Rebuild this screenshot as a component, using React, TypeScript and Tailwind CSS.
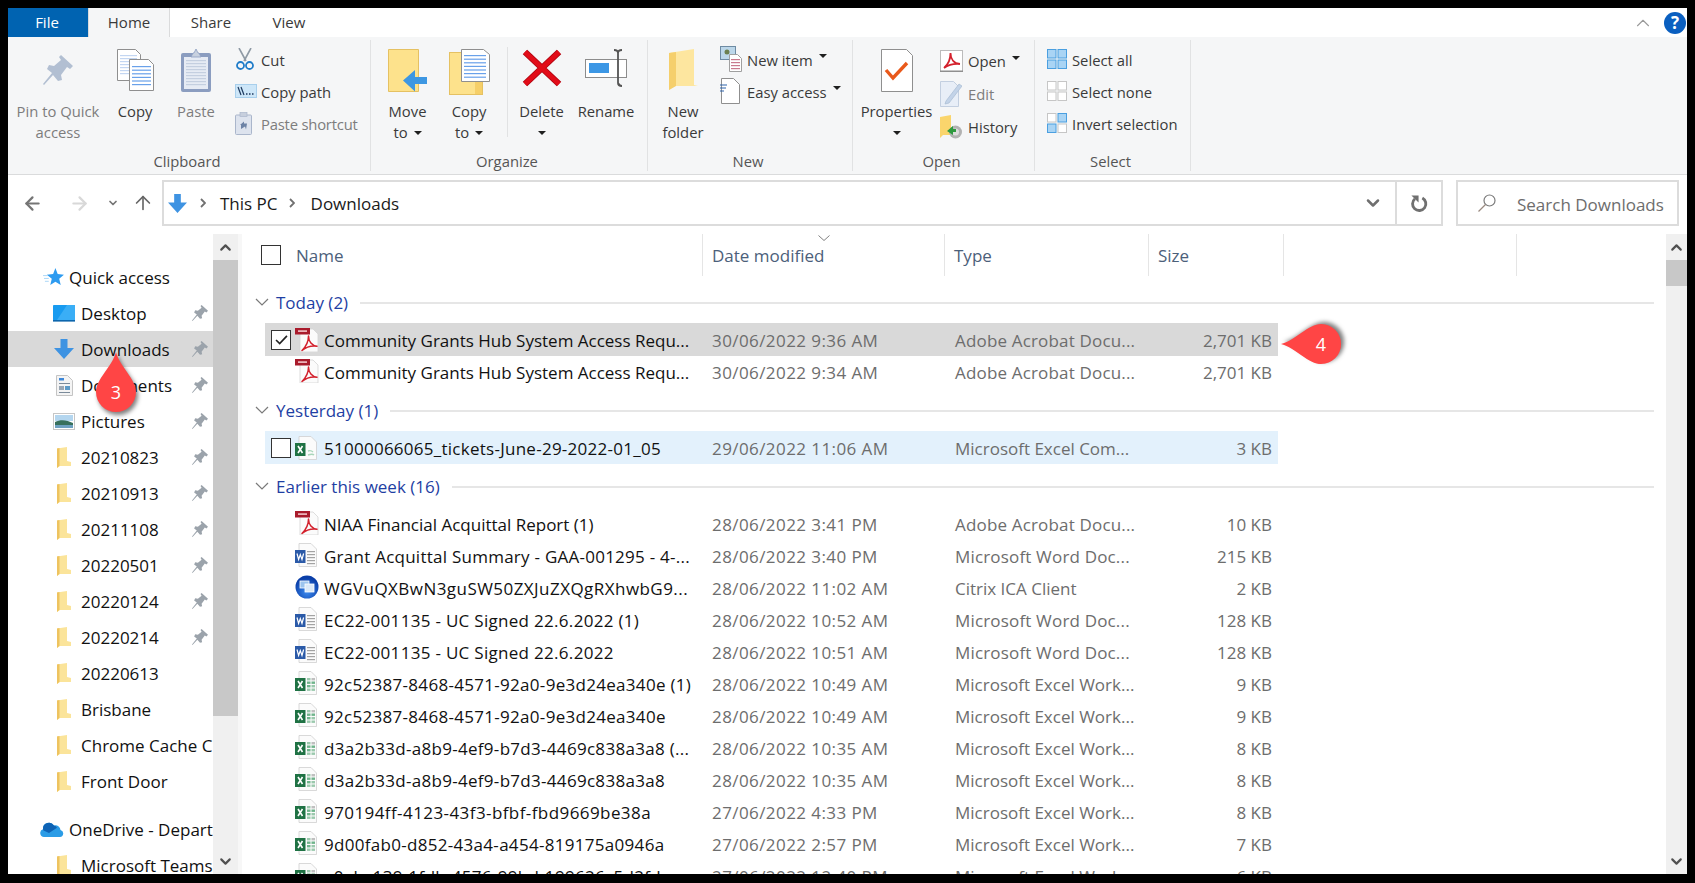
import { ArrowLeft, ArrowRight, ArrowUp, ChevronDown, ChevronUp } from 'lucide-react';
import type { ReactNode } from 'react';

const Caret = ({ className = '' }: { className?: string }) => (
  <svg viewBox="0 0 8 4" className={`inline-block w-[8px] h-[4px] ${className}`}>
    <path d="M0 0h8L4 4z" fill="#1f1f1f" />
  </svg>
);

const DocLines = ({ x, y, w, n, color, gap = 3 }: { x: number; y: number; w: number; n: number; color: string; gap?: number }) => (
  <>
    {Array.from({ length: n }).map((_, i) => (
      <rect key={i} x={x} y={y + i * gap} width={w} height="1.2" fill={color} />
    ))}
  </>
);

// ---- file type icons
const PdfIcon = () => (
  <svg viewBox="0 0 24 24" className="w-[24px] h-[24px] shrink-0">
    <path d="M5 1h13l5 5v18H5z" fill="#fbfbfb" stroke="#d4d4d4" strokeWidth="0.8" />
    <rect x="0" y="0" width="15" height="6.5" fill="#a91b2c" />
    <rect x="3" y="2.3" width="9" height="1.6" fill="#f2c4c8" />
    <path d="M7 22.5C10.5 19 13.5 13 13.5 8 13.5 13.5 17 17.5 22 18.2 16.5 17.5 10.5 19.5 7 22.5Z" fill="none" stroke="#d3202c" strokeWidth="1.5" strokeLinejoin="round" />
  </svg>
);

const ExcelIcon = ({ faded = false }: { faded?: boolean }) => (
  <svg viewBox="0 0 22 24" className="w-[22px] h-[24px] shrink-0">
    <path d="M4 0.5h12l5.5 5.5v17.5H4z" fill="#fbfbfb" stroke="#cfcfcf" strokeWidth="0.8" />
    {faded ? (
      <path d="M13 19c3-1 5-1 6 0M13 15c3-1 4 0 5 1" fill="none" stroke="#a9d6bb" strokeWidth="1.4" />
    ) : (
      <>
        <rect x="12" y="7" width="3.5" height="2.4" fill="#9bc9ad" />
        <rect x="16.5" y="7" width="3.5" height="2.4" fill="#bfbfbf" />
        <rect x="12" y="10.5" width="3.5" height="2.4" fill="#6fb48b" />
        <rect x="16.5" y="10.5" width="3.5" height="2.4" fill="#6fb48b" />
        <rect x="12" y="14" width="3.5" height="2.4" fill="#6fb48b" />
        <rect x="16.5" y="14" width="3.5" height="2.4" fill="#9bc9ad" />
        <rect x="12" y="17.5" width="3.5" height="2.4" fill="#9bc9ad" />
        <rect x="16.5" y="17.5" width="3.5" height="2.4" fill="#9bc9ad" />
      </>
    )}
    <rect x="0" y="7" width="10.5" height="13" fill="#1f7244" />
    <path d="M3 10l4.5 7M7.5 10L3 17" stroke="#fff" strokeWidth="1.6" />
  </svg>
);

const WordIcon = () => (
  <svg viewBox="0 0 22 24" className="w-[22px] h-[24px] shrink-0">
    <path d="M4 0.5h12l5.5 5.5v17.5H4z" fill="#fbfbfb" stroke="#cfcfcf" strokeWidth="0.8" />
    <DocLines x={12} y={8} w={8} n={5} color="#a3a3a3" />
    <rect x="0" y="7" width="10.5" height="13" fill="#2b5aa8" />
    <path d="M2 10.5l1.6 6 1.7-5 1.7 5 1.6-6" fill="none" stroke="#fff" strokeWidth="1.2" />
  </svg>
);

const CitrixIcon = () => (
  <svg viewBox="0 0 24 24" className="w-[24px] h-[24px] shrink-0">
    <defs>
      <radialGradient id="citrix" cx="50%" cy="70%" r="60%">
        <stop offset="0%" stopColor="#3d8cf0" />
        <stop offset="100%" stopColor="#0a3ea8" />
      </radialGradient>
    </defs>
    <circle cx="12" cy="12" r="11.5" fill="url(#citrix)" />
    <rect x="5" y="6" width="9" height="7" fill="#9cc4ee" stroke="#fff" strokeWidth="0.8" />
    <rect x="10" y="9" width="9" height="8" fill="#dbe9f8" stroke="#fff" strokeWidth="0.8" />
  </svg>
);

const NavFolder = () => (
  <svg viewBox="0 0 14 21" className="w-[14px] h-[21px]">
    <path d="M0 1.5L10 0v14l4 1v4H3L0 21z" fill="#fbe49a" />
    <path d="M0 1.5L2.5 1v17.8L0 21z" fill="#eec35f" />
  </svg>
);

const NavPin = () => (
  <svg viewBox="0 0 30 30" className="w-[16px] h-[16px]">
    <path d="M18 0l12 11-3 3-3-2-6 8 1 5-4 1-5-6-9 10-1-1 9-11-5-4 2-4 5 1 7-6-2-3z" fill="#9ba3ab" />
  </svg>
);

// ---- sidebar icons
const StarIcon = () => (
  <svg viewBox="0 0 22 20" className="w-[21px] h-[19px]">
    <path d="M13 0l2.4 6.4L22 7l-5 4.4 1.6 6.6-5.6-3.6L7.6 18l1.6-6.6L4 7l6.6-.6z" fill="#2d9bf0" />
    <path d="M0 8h5M1 11h5M2 14h4" stroke="#a6d5f7" strokeWidth="1" />
  </svg>
);
const DesktopIcon = () => (
  <svg viewBox="0 0 22 17" className="w-[22px] h-[17px]">
    <rect width="22" height="15.5" rx="0.8" fill="#189bf0" />
    <path d="M14 0h8v15H4z" fill="#3aaef6" />
    <rect y="15" width="22" height="1.6" fill="#0d66ad" />
  </svg>
);
const DownloadIcon = ({ className = 'w-[20px] h-[20px]' }: { className?: string }) => (
  <svg viewBox="0 0 20 20" className={className}>
    <path d="M6.5 0h7v9H20L10 20 0 9h6.5z" fill="#3e93e2" />
  </svg>
);
const DocumentsIcon = () => (
  <svg viewBox="0 0 17 21" className="w-[17px] h-[21px]">
    <path d="M0.5 0.5h11l5 5v15H0.5z" fill="#f4f4f4" stroke="#c4c4c4" />
    <rect x="3" y="3" width="5" height="2.5" fill="#3e87d8" />
    <rect x="3" y="8" width="11" height="1" fill="#7b8b9a" />
    <rect x="3" y="11" width="5" height="4" fill="#9aa7b4" />
    <rect x="9" y="11" width="5" height="4" fill="#5d9bc8" />
    <rect x="3" y="17" width="11" height="1" fill="#7b8b9a" />
  </svg>
);
const PicturesIcon = () => (
  <svg viewBox="0 0 22 17" className="w-[22px] h-[17px]">
    <rect x="0.5" y="0.5" width="21" height="16" fill="#fff" stroke="#c6c6c6" />
    <rect x="2" y="2" width="18" height="6" fill="#b4d6ef" />
    <path d="M2 9c6-3 12-2 18 1v5H2z" fill="#37705c" />
    <rect x="2" y="12" width="18" height="3" fill="#6da0c0" />
  </svg>
);
const CloudIcon = () => (
  <svg viewBox="0 0 24 16" className="w-[24px] h-[16px]">
    <path d="M4 16a4 4 0 0 1-1-7.8A6 6 0 0 1 14 4.5a5 5 0 0 1 6.5 4.6A3.5 3.5 0 0 1 20 16z" fill="#2b9ce6" />
    <path d="M3 8.2A6 6 0 0 1 14 4.5a5 5 0 0 1 3 2.2L9 12 3.5 9.5z" fill="#0e63b5" />
  </svg>
);

// ---- ribbon icons
const BigPin = () => (
  <svg viewBox="0 0 30 30" className="w-[30px] h-[30px] mt-[6px]">
    <path d="M18 0l12 11-3 3-3-2-6 8 1 5-4 1-5-6-9 10-1-1 9-11-5-4 2-4 5 1 7-6-2-3z" fill="#b2bfd2" />
  </svg>
);
const CopyIcon = () => (
  <svg viewBox="0 0 37 42" className="w-[37px] h-[42px]">
    <path d="M0.5 0.5h18l5 5v26H0.5z" fill="#fff" stroke="#8f8f8f" />
    <DocLines x={3} y={6} w={17} n={7} color="#c3d6f2" />
    <path d="M12.5 10.5h19l5 5v26h-24z" fill="#fff" stroke="#8f8f8f" />
    <DocLines x={15} y={17} w={19} n={6} color="#69a1ea" gap={3.6} />
  </svg>
);
const PasteIcon = () => (
  <svg viewBox="0 0 30 43" className="w-[30px] h-[43px]">
    <rect x="0" y="4" width="30" height="39" rx="2" fill="#8b9dc0" />
    <rect x="3" y="8" width="24" height="32" fill="#e6ebf4" />
    <DocLines x={5} y={11} w={20} n={9} color="#c4cfe0" />
    <path d="M10 8l2-4h1l2-4 2 4h1l2 4z" fill="#c8d1df" stroke="#8b9dc0" strokeWidth="0.8" />
  </svg>
);
const CutIcon = () => (
  <svg viewBox="0 0 20 22" className="w-[20px] h-[22px]">
    <path d="M4 0l7 13M16 0L9 13" stroke="#8f9aa5" strokeWidth="1.6" fill="none" />
    <circle cx="5.5" cy="17.5" r="3.5" fill="none" stroke="#1f7cc9" strokeWidth="1.8" />
    <circle cx="14.5" cy="17.5" r="3.5" fill="none" stroke="#1f7cc9" strokeWidth="1.8" />
  </svg>
);
const CopyPathIcon = () => (
  <svg viewBox="0 0 22 14" className="w-[22px] h-[14px]">
    <rect x="0.5" y="0.5" width="21" height="13" fill="#cde6f8" stroke="#a8cfec" />
    <path d="M3 3l3 8M6 3l3 8" stroke="#1e3a5f" strokeWidth="1.2" />
    <path d="M11 10h1.5M14 10h1.5M17 10h1.5" stroke="#1e3a5f" strokeWidth="1.3" />
  </svg>
);
const ShortcutIcon = () => (
  <svg viewBox="0 0 17 23" className="w-[17px] h-[23px]">
    <rect x="0.5" y="3" width="16" height="19.5" rx="1" fill="#dde3ee" stroke="#aab6cb" />
    <rect x="5" y="0.5" width="7" height="4" fill="#c7cfdd" stroke="#aab6cb" strokeWidth="0.7" />
    <path d="M6 17v-4l-1 0 4-3.5 0 2 3 0-1 6-1-3z" fill="#6d83a6" />
  </svg>
);
const MoveIcon = () => (
  <svg viewBox="0 0 39 43" className="w-[39px] h-[43px]">
    <path d="M0.5 42.5h30V0.5H0.5z" fill="#fde28c" stroke="#e5c162" />
    <path d="M15 31.5L27 21v7h12v7H27v7.5z" fill="#3d97e2" />
  </svg>
);
const CopyToIcon = () => (
  <svg viewBox="0 0 41 46" className="w-[41px] h-[46px]">
    <rect x="0.5" y="3.5" width="33" height="42" fill="#fde28c" stroke="#e5c162" />
    <rect x="26" y="10" width="7" height="35" fill="#f6cf68" />
    <path d="M12.5 0.5h22l6 5v27h-28z" fill="#fff" stroke="#8f8f8f" />
    <DocLines x={15} y={6} w={22} n={7} color="#69a1ea" gap={3.6} />
  </svg>
);
const DeleteIcon = () => (
  <svg viewBox="0 0 40 38" className="w-[40px] h-[38px]">
    <path d="M3 3l34 32M37 3L3 35" stroke="#b10612" strokeWidth="6.5" />
    <path d="M3 3l34 32M37 3L3 35" stroke="#e20c18" strokeWidth="4.5" />
  </svg>
);
const RenameIcon = () => (
  <svg viewBox="0 0 42 38" className="w-[42px] h-[38px]">
    <rect x="0.5" y="10.5" width="41" height="18" fill="#fff" stroke="#8c8c8c" />
    <rect x="4" y="14" width="20" height="10" fill="#3c97e5" />
    <path d="M29 1c2.5 0 4 1 4 3v30c0 2 1.5 3 4 3M37 1c-2.5 0-4 1-4 3M37 37c-1 0-2 0-4-3" fill="none" stroke="#545454" strokeWidth="1.8" />
  </svg>
);
const NewFolderIcon = () => (
  <svg viewBox="0 0 29 41" className="w-[29px] h-[41px]">
    <path d="M25 0v36l4 1-23 0-6 4V4z" fill="#fde69f" />
    <path d="M0 4l7-1v34l-7 4z" fill="#f5cf6c" />
  </svg>
);
const NewItemIcon = () => (
  <svg viewBox="0 0 22 26" className="w-[22px] h-[26px]">
    <rect x="0.5" y="0.5" width="15" height="13" fill="#bcd7ea" stroke="#6e8ba3" />
    <circle cx="7" cy="6" r="2.5" fill="#6b7f4f" />
    <path d="M9.5 8.5h8l4 4v13h-12z" fill="#fff" stroke="#a0a0a0" />
    <DocLines x={11} y={13} w={9} n={4} color="#c97a8e" />
  </svg>
);
const EasyAccessIcon = () => (
  <svg viewBox="0 0 20 26" className="w-[20px] h-[26px]">
    <path d="M1.5 0.5h12l6 6v19h-18z" fill="#fff" stroke="#8f8f8f" />
    <path d="M0 7h7M0 10h6M0 13h4" stroke="#2c62aa" strokeWidth="1.2" />
  </svg>
);
const PropertiesIcon = () => (
  <svg viewBox="0 0 32 43" className="w-[32px] h-[43px]">
    <path d="M0.5 0.5h25l6 6v36h-31z" fill="#fff" stroke="#8f8f8f" />
    <path d="M5 21l7 8L26 14" fill="none" stroke="#e9591b" strokeWidth="3.4" />
  </svg>
);
const OpenPdfIcon = () => (
  <svg viewBox="0 0 23 22" className="w-[23px] h-[22px] shrink-0">
    <rect x="0.5" y="0.5" width="22" height="21" fill="#fff" stroke="#bbb" />
    <rect y="20.5" width="23" height="1.5" fill="#8f8f8f" />
    <path d="M4 18C7.5 15 10.5 9 10.5 3 10.5 9 14 13.5 20 14 14 13.5 8 15 4 18Z" fill="none" stroke="#d3202c" strokeWidth="1.8" />
  </svg>
);
const EditIcon = () => (
  <svg viewBox="0 0 22 26" className="w-[22px] h-[26px] shrink-0">
    <path d="M0.5 0.5h13l5 5v20h-18z" fill="#e8eef7" stroke="#c3cfe0" />
    <path d="M6 20L19 3l3 2L9 22l-4 1z" fill="#c3d3e8" stroke="#a8bbd3" strokeWidth="0.7" />
  </svg>
);
const HistoryIcon = () => (
  <svg viewBox="0 0 22 24" className="w-[22px] h-[24px] shrink-0">
    <path d="M0 2L11 0v20l-8 0-3 3z" fill="#fad56c" />
    <circle cx="15.5" cy="17" r="6.5" fill="#b2b2b2" />
    <circle cx="15.5" cy="17" r="3.5" fill="#dcdcdc" />
    <path d="M13 11l-6 5 6 4v-3h3v-3h-3z" fill="#2e9a3f" />
  </svg>
);
const Squares = ({ on }: { on: boolean[] }) => (
  <svg viewBox="0 0 20 20" className="w-[20px] h-[20px] shrink-0">
    {[[0, 0], [10.5, 0], [0, 10.5], [10.5, 10.5]].map(([x, y], i) => (
      <rect key={i} x={x + 0.5} y={y + 0.5} width="8.5" height="8.5" fill={on[i] ? '#a9d4f4' : '#fff'} stroke={on[i] ? '#4a9fe0' : '#c6c6c6'} />
    ))}
  </svg>
);

// ---- ribbon parts
const BigButton = ({ w, icon, lines, muted, caret }: { w: number; icon: ReactNode; lines: ReactNode[]; muted?: boolean; caret?: boolean }) => (
  <div style={{ width: w }} className={`flex flex-col items-center pt-[12px] shrink-0 leading-[21px] ${muted ? 'text-[#7d7d7d]' : 'text-[#3a3a3a]'}`}>
    <div className="h-[52px] flex items-start justify-center">{icon}</div>
    {lines.map((l, i) => (
      <div key={i} className="text-center whitespace-nowrap h-[21px]">{l}</div>
    ))}
    {caret && <div className="h-[21px] flex items-center justify-center"><Caret /></div>}
  </div>
);

const SmallButton = ({ icon, label, muted, caret, h = 'h-[32px]', iconBox = 'w-[28px]', track = '' }: { icon: ReactNode; label: string; muted?: boolean; caret?: boolean; h?: string; iconBox?: string; track?: string }) => (
  <div className={`flex items-center ${h} whitespace-nowrap ${muted ? 'text-[#7d7d7d]' : 'text-[#3a3a3a]'}`}>
    <div className={`${iconBox} shrink-0 flex items-center`}>{icon}</div>
    <span className={`pt-[2px] ${track}`}>{label}</span>
    {caret && <Caret className="ml-[6px] mb-[6px]" />}
  </div>
);

const Group = ({ w, label, children }: { w: number; label: string; children: ReactNode }) => (
  <div style={{ width: w }} className="shrink-0 flex flex-col h-full">
    <div className="flex flex-1 min-h-0">{children}</div>
    <div className="h-[25px] pr-[4px] text-center text-[#555] leading-[24px]">{label}</div>
  </div>
);

const GroupSep = () => <div className="w-px h-[131px] mt-[3px] bg-[#e1e2e3] shrink-0" />;

const Ribbon = () => (
  <div className="h-[138px] bg-[#f5f6f7] border-b border-[#dadbdc] flex text-[14.8px] shrink-0">
    <Group w={362} label="Clipboard">
      <div className="w-[8px]" />
      <BigButton w={84} muted icon={<BigPin />} lines={['Pin to Quick', 'access']} />
      <BigButton w={70} icon={<CopyIcon />} lines={['Copy']} />
      <BigButton w={52} muted icon={<PasteIcon />} lines={['Paste']} />
      <div className="pl-[11px] pt-[6px]">
        <SmallButton iconBox="w-[28px] pl-[2px]" icon={<CutIcon />} label="Cut" />
        <SmallButton iconBox="w-[28px] pl-[2px]" icon={<CopyPathIcon />} label="Copy path" />
        <SmallButton iconBox="w-[28px] pl-[2px]" track="tracking-[-0.2px]" muted icon={<ShortcutIcon />} label="Paste shortcut" />
      </div>
    </Group>
    <GroupSep />
    <Group w={276} label="Organize">
      <BigButton w={73} icon={<MoveIcon />} lines={[<>Move</>, <>to <Caret className="ml-[2px] mb-[3px]" /></>]} />
      <BigButton w={50} icon={<CopyToIcon />} lines={[<>Copy</>, <>to <Caret className="ml-[2px] mb-[3px]" /></>]} />
      <div className="w-px h-[90px] mt-[10px] ml-[13px] bg-[#e1e2e3]" />
      <BigButton w={67} icon={<DeleteIcon />} lines={['Delete']} caret />
      <BigButton w={62} icon={<RenameIcon />} lines={['Rename']} />
    </Group>
    <GroupSep />
    <Group w={204} label="New">
      <BigButton w={70} icon={<NewFolderIcon />} lines={['New', 'folder']} />
      <div className="pt-[6px] pl-[2px]">
        <SmallButton iconBox="w-[27px]" icon={<NewItemIcon />} label="New item" caret />
        <SmallButton iconBox="w-[27px]" icon={<EasyAccessIcon />} label="Easy access" caret />
      </div>
    </Group>
    <GroupSep />
    <Group w={181} label="Open">
      <BigButton w={87} icon={<PropertiesIcon />} lines={['Properties']} caret />
      <div className="pt-[7px]">
        <SmallButton h="h-[33px]" icon={<OpenPdfIcon />} label="Open" caret />
        <SmallButton h="h-[33px]" muted icon={<EditIcon />} label="Edit" />
        <SmallButton h="h-[33px]" icon={<HistoryIcon />} label="History" />
      </div>
    </Group>
    <GroupSep />
    <Group w={155} label="Select">
      <div className="pl-[12px] pt-[6px]">
        <SmallButton iconBox="w-[25px]" icon={<Squares on={[true, true, true, true]} />} label="Select all" />
        <SmallButton iconBox="w-[25px]" icon={<Squares on={[false, false, false, false]} />} label="Select none" />
        <SmallButton iconBox="w-[25px]" icon={<Squares on={[false, true, true, false]} />} label="Invert selection" />
      </div>
    </Group>
    <GroupSep />
  </div>
);

const AddressRow = () => (
  <div className="h-[59px] flex items-start pt-[5px] shrink-0 bg-white text-[17px]">
    <div className="h-[46px] w-[48px] flex items-center justify-center"><ArrowLeft size={21} strokeWidth={2.5} className="text-[#757575]" /></div>
    <div className="h-[46px] w-[46px] flex items-center justify-center"><ArrowRight size={21} strokeWidth={2.5} className="text-[#d8d8d8]" /></div>
    <div className="h-[46px] w-[22px] flex items-center justify-center"><ChevronDown size={12} strokeWidth={3.5} className="text-[#757575]" /></div>
    <div className="h-[46px] w-[38px] flex items-center justify-center"><ArrowUp size={22} strokeWidth={1.8} className="text-[#666]" /></div>
    <div className="h-[46px] w-[1281px] border-2 border-[#dcdcdc] flex items-center shrink-0">
      <div className="ml-[4px] w-[20px]"><DownloadIcon className="w-[19px] h-[21px]" /></div>
      <svg viewBox="0 0 6 10" className="ml-[12px] w-[6px] h-[10px]"><path d="M1 1l4 4-4 4" fill="none" stroke="#707070" strokeWidth="1.8" /></svg>
      <span className="ml-[14px] pt-[2px] text-[#1a1a1a]">This PC</span>
      <svg viewBox="0 0 6 10" className="ml-[11px] w-[6px] h-[10px]"><path d="M1 1l4 4-4 4" fill="none" stroke="#707070" strokeWidth="1.8" /></svg>
      <span className="ml-[16px] pt-[2px] text-[#1a1a1a]">Downloads</span>
      <div className="flex-1" />
      <div className="w-[44px] h-full flex items-center justify-center"><ChevronDown size={20} strokeWidth={3} className="text-[#6f6f6f]" /></div>
      <div className="w-[46px] h-full border-l-2 border-[#dcdcdc] flex items-center justify-center">
        <svg viewBox="0 0 20 20" className="w-[19px] h-[19px]">
          <path d="M13 4.2A7 7 0 1 1 5.2 5" fill="none" stroke="#707070" strokeWidth="3" />
          <path d="M1.5 1.5h7.5v7.5z" fill="#707070" />
        </svg>
      </div>
    </div>
    <div className="ml-[13px] h-[46px] w-[223px] border-2 border-[#dcdcdc] flex items-center shrink-0">
      <svg viewBox="0 0 18 18" className="ml-[20px] w-[18px] h-[18px]">
        <circle cx="11.5" cy="6.5" r="5.5" fill="none" stroke="#7a7a7a" strokeWidth="1.2" />
        <path d="M7.5 10.5L0.5 17.5" stroke="#9a8a80" strokeWidth="1.2" />
      </svg>
      <span className="ml-[21px] pt-[4px] text-[#6d6d6d] whitespace-nowrap">Search Downloads</span>
    </div>
  </div>
);

const ScrollBar = ({ w, thumb }: { w: string; thumb: string }) => (
  <div className={`${w} shrink-0 h-full bg-[#f0f0f0] flex flex-col overflow-hidden`}>
    <div className="h-[26px] flex items-center justify-center shrink-0"><ChevronUp size={17} strokeWidth={3} className="text-[#505050]" /></div>
    <div className={`${thumb} bg-[#c8c8c8] shrink-0`} />
    <div className="flex-1" />
    <div className="h-[26px] flex items-center justify-center shrink-0"><ChevronDown size={17} strokeWidth={3} className="text-[#505050]" /></div>
  </div>
);

type NavItem = { name: string; icon: ReactNode; pin?: boolean; active?: boolean };

const navItems: NavItem[] = [
  { name: 'Desktop', icon: <DesktopIcon />, pin: true },
  { name: 'Downloads', icon: <DownloadIcon />, pin: true, active: true },
  { name: 'Documents', icon: <DocumentsIcon />, pin: true },
  { name: 'Pictures', icon: <PicturesIcon />, pin: true },
  { name: '20210823', icon: <NavFolder />, pin: true },
  { name: '20210913', icon: <NavFolder />, pin: true },
  { name: '20211108', icon: <NavFolder />, pin: true },
  { name: '20220501', icon: <NavFolder />, pin: true },
  { name: '20220124', icon: <NavFolder />, pin: true },
  { name: '20220214', icon: <NavFolder />, pin: true },
  { name: '20220613', icon: <NavFolder /> },
  { name: 'Brisbane', icon: <NavFolder /> },
  { name: 'Chrome Cache C', icon: <NavFolder /> },
  { name: 'Front Door', icon: <NavFolder /> },
];

const Sidebar = () => (
  <div className="w-[230px] shrink-0 flex h-full text-[17px] text-[#111]">
    <div className="w-[205px] shrink-0 overflow-hidden pt-[25px]">
      <div className="h-[36px] flex items-center pl-[35px] whitespace-nowrap">
        <div className="w-[26px] shrink-0"><StarIcon /></div>
        <span className="pt-[2px]">Quick access</span>
      </div>
      {navItems.map((n) => (
        <div key={n.name} className={`h-[36px] flex items-center whitespace-nowrap ${n.active ? 'bg-[#d9d9d9]' : ''}`}>
          <div className="w-[73px] shrink-0 pl-[44px] pr-[5px] flex justify-center">{n.icon}</div>
          <span className="flex-1 overflow-hidden pt-[2px]">{n.name}</span>
          {n.pin && <div className="w-[20px] shrink-0 mr-[1px]"><NavPin /></div>}
        </div>
      ))}
      <div className="h-[12px]" />
      <div className="h-[36px] flex items-center pl-[32px] whitespace-nowrap">
        <div className="w-[29px] shrink-0"><CloudIcon /></div>
        <span className="pt-[2px]">OneDrive - Depart</span>
      </div>
      <div className="h-[36px] flex items-center whitespace-nowrap">
        <div className="w-[73px] shrink-0 pl-[44px] pr-[5px] flex justify-center"><NavFolder /></div>
        <span className="pt-[2px]">Microsoft Teams</span>
      </div>
    </div>
    <ScrollBar w="w-[25px]" thumb="h-[456px]" />
  </div>
);

type FileRow = { name: string; date: string; type: string; size: string; icon: 'pdf' | 'xls' | 'doc' | 'ica' | 'xlt'; state?: 'selected' | 'hover'; track?: string };

const ICONS = { pdf: <PdfIcon />, xls: <ExcelIcon />, doc: <WordIcon />, ica: <CitrixIcon />, xlt: <ExcelIcon faded /> };

const Row = ({ f }: { f: FileRow }) => (
  <div
    className={`flex items-center w-[1013px] ml-[23px] whitespace-nowrap pt-[3px] ${f.state ? 'h-[33px] -mb-px' : 'h-[32px]'} ${
      f.state === 'selected' ? 'bg-[#d9d9d9]' : f.state === 'hover' ? 'bg-[#e3f1fc]' : ''
    }`}
  >
    <div className="w-[6px] shrink-0" />
    <div className="w-[23px] shrink-0">
      {f.state && (
        <div className="w-[20px] h-[20px] -mt-[3px] border-[1.5px] border-[#333] bg-white flex items-center justify-center">
          {f.state === 'selected' && (
            <svg viewBox="0 0 14 11" className="w-[13px] h-[10px]"><path d="M1 5.5l4 4L13 1" fill="none" stroke="#222" strokeWidth="1.8" /></svg>
          )}
        </div>
      )}
    </div>
    <div className="w-[30px] shrink-0 -mt-[3px] pl-px">{ICONS[f.icon]}</div>
    <div className={`w-[388px] shrink-0 text-[#111] ${f.track ?? ''}`}>{f.name}</div>
    <div className="w-[243px] shrink-0 text-[#6d6d6d] tracking-[0.42px]">{f.date}</div>
    <div className={`w-[170px] shrink-0 text-[#6d6d6d] ${f.type === PDF_TYPE || f.type === WORD_TYPE ? 'tracking-[0.17px]' : ''}`}>{f.type}</div>
    <div className="flex-1 pr-[6px] text-right text-[#6d6d6d]">{f.size}</div>
  </div>
);

const SectionHead = ({ label, line }: { label: string; line?: boolean }) => (
  <div className={`h-[34px] flex items-center mb-[3px] ${line ? 'mt-[7px]' : ''}`}>
    <svg viewBox="0 0 14 8" className="ml-[13px] w-[14px] h-[8px] shrink-0 -mt-[2px]">
      <path d="M1 1l6 6 6-6" fill="none" stroke="#7a7a7a" strokeWidth="1.2" />
    </svg>
    <span className="ml-[7px] text-[#1f3fa3] whitespace-nowrap">{label}</span>
    <div className="flex-1 h-[2px] bg-[#e6e6e6] ml-[12px] mr-[12px]" />
  </div>
);

const PDF_TYPE = 'Adobe Acrobat Docu...';
const WORD_TYPE = 'Microsoft Word Doc...';
const XL_TYPE = 'Microsoft Excel Work...';
const HEX = 'tracking-[0.3px]';

const earlier: FileRow[] = [
  { name: 'NIAA Financial Acquittal Report (1)', date: '28/06/2022 3:41 PM', type: PDF_TYPE, size: '10 KB', icon: 'pdf' },
  { name: 'Grant Acquittal Summary - GAA-001295 - 4-...', date: '28/06/2022 3:40 PM', type: WORD_TYPE, size: '215 KB', icon: 'doc', track: 'tracking-[0.25px]' },
  { name: 'WGVuQXBwN3guSW50ZXJuZXQgRXhwbG9...', date: '28/06/2022 11:02 AM', type: 'Citrix ICA Client', size: '2 KB', icon: 'ica', track: 'tracking-[0.45px]' },
  { name: 'EC22-001135 - UC Signed 22.6.2022 (1)', date: '28/06/2022 10:52 AM', type: WORD_TYPE, size: '128 KB', icon: 'doc', track: 'tracking-[0.3px]' },
  { name: 'EC22-001135 - UC Signed 22.6.2022', date: '28/06/2022 10:51 AM', type: WORD_TYPE, size: '128 KB', icon: 'doc', track: 'tracking-[0.3px]' },
  { name: '92c52387-8468-4571-92a0-9e3d24ea340e (1)', date: '28/06/2022 10:49 AM', type: XL_TYPE, size: '9 KB', icon: 'xls', track: HEX },
  { name: '92c52387-8468-4571-92a0-9e3d24ea340e', date: '28/06/2022 10:49 AM', type: XL_TYPE, size: '9 KB', icon: 'xls', track: HEX },
  { name: 'd3a2b33d-a8b9-4ef9-b7d3-4469c838a3a8 (...', date: '28/06/2022 10:35 AM', type: XL_TYPE, size: '8 KB', icon: 'xls', track: HEX },
  { name: 'd3a2b33d-a8b9-4ef9-b7d3-4469c838a3a8', date: '28/06/2022 10:35 AM', type: XL_TYPE, size: '8 KB', icon: 'xls', track: HEX },
  { name: '970194ff-4123-43f3-bfbf-fbd9669be38a', date: '27/06/2022 4:33 PM', type: XL_TYPE, size: '8 KB', icon: 'xls', track: 'tracking-[0.42px]' },
  { name: '9d00fab0-d852-43a4-a454-819175a0946a', date: '27/06/2022 2:57 PM', type: XL_TYPE, size: '7 KB', icon: 'xls', track: HEX },
  { name: 'a0ebc139-1fdb-4576-99bd-199626c5d2fd', date: '27/06/2022 12:40 PM', type: XL_TYPE, size: '6 KB', icon: 'xls', track: HEX },
];

const ColHead = ({ w, label, pl }: { w: string; label?: string; pl?: string }) => (
  <div className={`${w} h-full border-r border-[#e5e5e5] flex items-center shrink-0 text-[#4c607a] ${pl ?? ''}`}>
    {label && <span className="pt-[2px]">{label}</span>}
  </div>
);

const FileList = () => (
  <div className="flex-1 min-w-0 h-full overflow-hidden text-[17px] flex flex-col">
    <div className="h-[42px] flex shrink-0 relative">
      <div className="w-[461px] h-full border-r border-[#e5e5e5] flex items-center shrink-0 text-[#4c607a]">
        <div className="ml-[19px] w-[20px] h-[20px] border-[1.5px] border-[#333] bg-white" />
        <span className="ml-[15px] pt-[2px]">Name</span>
      </div>
      <ColHead w="w-[242px]" label="Date modified" pl="pl-[9px]" />
      <ColHead w="w-[204px]" label="Type" pl="pl-[9px]" />
      <ColHead w="w-[135px]" label="Size" pl="pl-[9px]" />
      <ColHead w="w-[233px]" />
      <svg viewBox="0 0 12 6" className="absolute left-[576px] top-[1px] w-[12px] h-[6px]"><path d="M0.5 0.5l5.5 5 5.5-5" fill="none" stroke="#808080" /></svg>
    </div>
    <div className="pt-[10px]">
      <SectionHead label="Today (2)" />
      <Row f={{ name: 'Community Grants Hub System Access Requ...', date: '30/06/2022 9:36 AM', type: PDF_TYPE, size: '2,701 KB', icon: 'pdf', state: 'selected' }} />
      <Row f={{ name: 'Community Grants Hub System Access Requ...', date: '30/06/2022 9:34 AM', type: PDF_TYPE, size: '2,701 KB', icon: 'pdf' }} />
      <SectionHead line label="Yesterday (1)" />
      <Row f={{ name: '51000066065_tickets-June-29-2022-01_05', date: '29/06/2022 11:06 AM', type: 'Microsoft Excel Com...', size: '3 KB', icon: 'xlt', state: 'hover', track: 'tracking-[0.26px]' }} />
      <SectionHead line label="Earlier this week (16)" />
      {earlier.map((f) => (
        <Row key={f.name} f={f} />
      ))}
    </div>
  </div>
);

const Marker = ({ n, rotate, className }: { n: string; rotate: string; className: string }) => (
  <div className={`absolute w-[42px] h-[42px] ${className}`}>
    <svg viewBox="0 0 42 42" className={`w-full h-full overflow-visible drop-shadow-[2px_3px_2px_rgba(0,0,0,0.5)] ${rotate}`}>
      <path d="M21 -19C25 -4 41 8 41 21A20 20 0 0 1 1 21C1 8 17 -4 21 -19Z" fill="#ff4545" />
    </svg>
    <span className="absolute inset-0 flex items-center justify-center text-white text-[18px]">{n}</span>
  </div>
);

export default function App() {
  return (
    <div className="relative h-[883px] w-[1695px] overflow-hidden bg-black pt-[8px] pb-[9px] px-[8px] font-['Open_Sans','Noto_Sans',sans-serif]">
      <div className="h-full bg-white flex flex-col overflow-hidden">
        <div className="h-[29px] flex items-stretch shrink-0 bg-white text-[15px] text-[#3a3a3a] relative">
          <div className="w-[80px] bg-[#0063b1] text-white flex items-center justify-center pr-[2px]">File</div>
          <div className="w-[82px] bg-[#f5f6f7] border-x border-[#dadbdc] flex items-center justify-center">Home</div>
          <div className="w-[82px] flex items-center justify-center">Share</div>
          <div className="w-[74px] flex items-center justify-center">View</div>
          <div className="flex-1" />
          <div className="w-[22px] flex items-center justify-center mr-[10px]"><ChevronUp size={22} strokeWidth={1.2} className="text-[#9a9a9a]" /></div>
          <div className="w-[22px] h-[22px] rounded-full bg-[#0a5fc0] text-white text-[17px] font-bold flex items-center justify-center self-center mr-px">?</div>
        </div>
        <Ribbon />
        <AddressRow />
        <div className="flex-1 min-h-0 flex">
          <Sidebar />
          <div className="w-[4px] shrink-0 bg-[#f7f7f7]" />
          <FileList />
          <ScrollBar w="w-[21px]" thumb="h-[26px]" />
        </div>
      </div>
      <Marker n="3" rotate="" className="left-[95px] top-[371px]" />
      <Marker n="4" rotate="-rotate-90" className="left-[1300px] top-[323px]" />
    </div>
  );
}
